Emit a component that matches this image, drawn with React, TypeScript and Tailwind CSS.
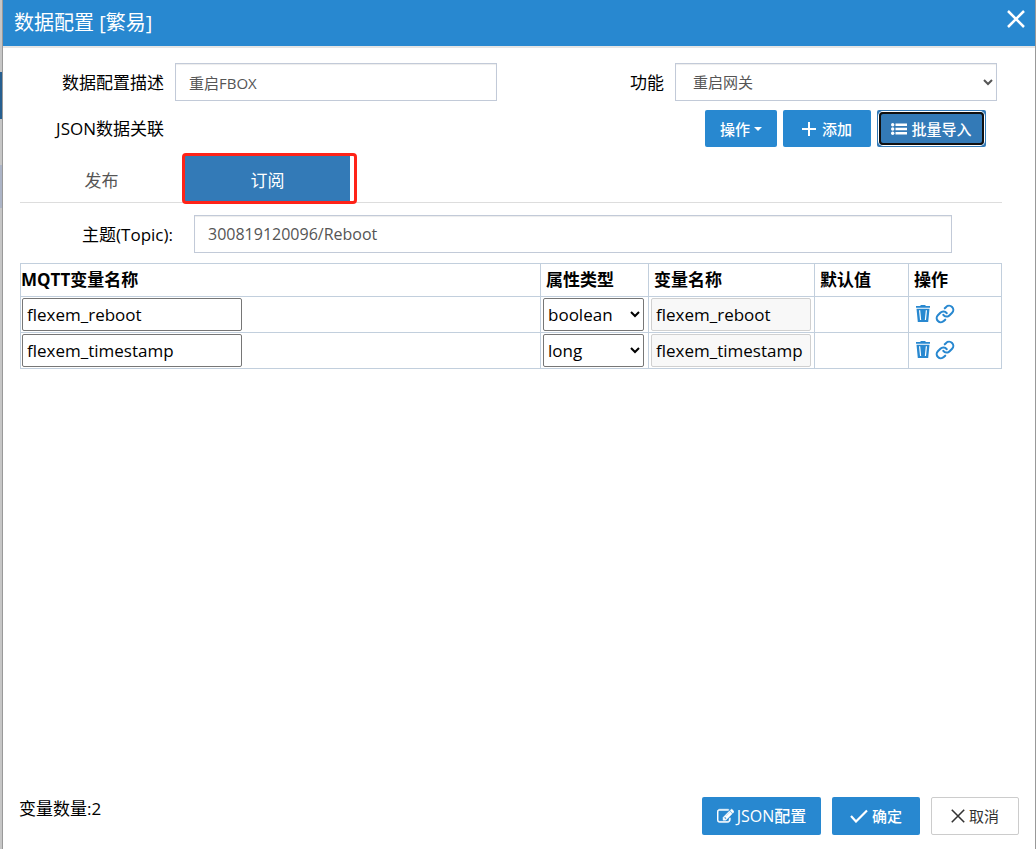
import { useState } from 'react';

type Row = {
  name: string;
  type: string;
};

const initialRows: Row[] = [
  { name: 'flexem_reboot', type: 'boolean' },
  { name: 'flexem_timestamp', type: 'long' },
];

const attrTypes = ['boolean', 'long', 'int', 'float', 'string'];

const primaryBtn =
  'flex items-center justify-center rounded-xs bg-[#2888d0] font-medium text-white hover:bg-[#337ab7]';

function CloseIcon({ className }: { className: string }) {
  return (
    <svg viewBox="0 0 18 18" className={className} fill="none" stroke="currentColor">
      <path d="M1 1l16 16M17 1L1 17" />
    </svg>
  );
}

function PlusIcon() {
  return (
    <svg viewBox="0 0 14 14" className="h-3.5 w-3.5" fill="none" stroke="currentColor" strokeWidth="2">
      <path d="M7 0v14M0 7h14" />
    </svg>
  );
}

function ListIcon() {
  return (
    <svg viewBox="0 0 16 12" className="h-3 w-4" fill="currentColor">
      <circle cx="1.7" cy="1.7" r="1.7" />
      <circle cx="1.7" cy="6" r="1.7" />
      <circle cx="1.7" cy="10.3" r="1.7" />
      <path d="M4.500 0.500h11.500v2.500H4.500zM4.500 4.700h11.500v2.500H4.500zM4.500 9h11.500v2.500H4.500z" />
    </svg>
  );
}

function EditIcon() {
  return (
    <svg viewBox="0 0 1792 1792" className="h-[17px] w-[17px]" fill="currentColor" stroke="currentColor" strokeWidth="50">
      <path d="M888 1184l116-116-152-152-116 116v56h96v96h56zm440-720q-16-16-33 1l-350 350q-17 17-1 33t33-1l350-350q17-17 1-33zm80 594v190q0 119-84.500 203.500t-203.500 84.500h-832q-119 0-203.500-84.500t-84.500-203.500v-832q0-119 84.500-203.500t203.500-84.500h832q63 0 117 25 15 7 18 23 3 17-9 29l-49 49q-14 14-32 8-23-6-45-6h-832q-66 0-113 47t-47 113v832q0 66 47 113t113 47h832q66 0 113-47t47-113v-126q0-13 9-22l64-64q15-15 35-7t20 29zm-96-738l288 288-672 672h-288v-288zm444 132l-92 92-288-288 92-92q28-28 68-28t68 28l152 152q28 28 28 68t-28 68z" />
    </svg>
  );
}

function CheckIcon() {
  return (
    <svg viewBox="0 0 18 14" className="h-3.5 w-[18px]" fill="none" stroke="currentColor" strokeWidth="2.200">
      <path d="M1 7l5 5.500L17 1.500" />
    </svg>
  );
}

function TrashIcon() {
  return (
    <svg viewBox="0 0 14 17" className="h-[17px] w-3.5">
      <path fill="currentColor" d="M4.500 0h5v1H14v1.700H0V1h4.500zM0.500 3.700h13L12.200 17H1.800z" />
      <path stroke="#fff" strokeWidth="1.200" fill="none" d="M3.600 5.200l1 9.800M10.400 5.200l-1 9.800" />
    </svg>
  );
}

function LinkIcon() {
  return (
    <svg viewBox="0 0 24 24" className="h-5 w-5" fill="none" stroke="currentColor" strokeWidth="2.500" strokeLinecap="round">
      <path d="M10 13a5 5 0 0 0 7.540.54l3-3a5 5 0 0 0-7.070-7.070l-1.720 1.710" />
      <path d="M14 11a5 5 0 0 0-7.540-.54l-3 3a5 5 0 0 0 7.070 7.070l1.710-1.710" />
    </svg>
  );
}

export default function App() {
  const [rows, setRows] = useState(initialRows);
  const [tab, setTab] = useState('sub');
  const [desc, setDesc] = useState('重启FBOX');
  const [topic, setTopic] = useState('300819120096/Reboot');

  const updateRow = (index: number, patch: Partial<Row>) => {
    setRows(rows.map((row, i) => (i === index ? { ...row, ...patch } : row)));
  };

  return (
    <div className="flex min-h-screen bg-[#999] pr-px font-['Open_Sans','Noto_Sans_CJK_SC',sans-serif] text-[17px] leading-6 text-black">
      {/* Page edge behind the dialog */}
      <div className="flex w-[3px] shrink-0 flex-col border-r border-[#999] bg-[#c6c6c6]">
        <div className="mt-[72px] h-[47px] bg-[#265f90]" />
        <div className="mt-[46px] h-[43px] bg-[#acb4c6]" />
      </div>

      <div role="dialog" aria-labelledby="dialog-title" className="flex min-w-0 flex-1 flex-col bg-white">
        <header className="flex h-12 items-center justify-between border-b-2 border-[#e5e5e5] bg-[#2888d0] pr-2.5 pl-[11px] text-white">
          <h1 id="dialog-title" className="text-[20px]">数据配置 [繁易]</h1>
          <button type="button" aria-label="关闭" className="mb-2">
            <CloseIcon className="h-[18px] w-[18px] stroke-[2.500]" />
          </button>
        </header>

        <main className="flex-1 pt-[15px] pr-[33px] pl-[17px]">
          <div className="grid grid-cols-[144px_1fr_156px_1fr] items-center gap-x-[11px] pr-[5px]">
            <label htmlFor="desc" className="pt-0.5 text-right">数据配置描述</label>
            <input
              id="desc"
              value={desc}
              onChange={(e) => setDesc(e.target.value)}
              className="h-[38px] min-w-0 border border-[#c2cad8] px-[13px] text-[15px] text-[#555] shadow-[inset_0_1px_1px_rgba(0,0,0,0.075)] outline-none"
            />
            <label htmlFor="func" className="pt-0.5 text-right">功能</label>
            <select
              id="func"
              className="h-[38px] min-w-0 border border-[#c2cad8] bg-white px-[13px] text-[15px] text-[#555] shadow-[inset_0_1px_1px_rgba(0,0,0,0.075)] outline-none"
            >
              <option>重启网关</option>
            </select>
          </div>

          <div className="mt-[9px] flex items-center justify-between pr-4">
            <span className="w-[144px] text-right">JSON数据关联</span>
            <div className="flex gap-1.5">
              <button type="button" className={`${primaryBtn} h-[37px] w-[72px] gap-1 text-[15px]`}>
                操作
                <svg viewBox="0 0 8 4" className="h-1 w-2" fill="currentColor">
                  <path d="M0 0h8L4 4z" />
                </svg>
              </button>
              <button type="button" className={`${primaryBtn} h-[37px] w-[88px] gap-1.5 text-[15px]`}>
                <PlusIcon />
                添加
              </button>
              <button
                type="button"
                className="flex h-[37px] w-[109px] rounded-xs bg-[#337ab7] p-0.5 text-[15px] font-medium text-white"
              >
                <span className="flex h-full w-full items-center justify-center gap-1 rounded-sm border-2 border-[#101010] ring-1 ring-white">
                  <ListIcon />
                  批量导入
                </span>
              </button>
            </div>
          </div>

          <div role="tablist" className="mt-[9px] flex h-[47px] items-stretch border-b border-[#ddd]">
            <button
              type="button"
              role="tab"
              aria-selected={tab === 'pub'}
              onClick={() => setTab('pub')}
              className="mr-0.5 w-[163px] pt-1 text-[#555]"
            >
              发布
            </button>
            <div className="relative flex">
              <button
                type="button"
                role="tab"
                aria-selected={tab === 'sub'}
                onClick={() => setTab('sub')}
                className="w-[165px] bg-[#337ab7] pt-1 text-white"
              >
                订阅
              </button>
              <div className="pointer-events-none absolute -top-[3px] -right-[7px] -bottom-0.5 -left-[3px] rounded-sm border-[3px] border-[#ff2318]" />
            </div>
          </div>

          <div className="mt-3 flex items-center pr-[50px]">
            <label htmlFor="topic" className="mr-[21px] w-[153px] pt-0.5 text-right">主题(Topic):</label>
            <input
              id="topic"
              value={topic}
              onChange={(e) => setTopic(e.target.value)}
              className="h-[38px] min-w-0 flex-1 border border-[#c2cad8] px-[13px] text-base text-[#555] shadow-[inset_0_1px_1px_rgba(0,0,0,0.075)] outline-none"
            />
          </div>

          <table className="mt-2.5 w-full table-fixed border-collapse text-left [&_td]:border [&_td]:border-[#c2cfdd] [&_td]:p-px [&_th]:border [&_th]:border-[#c2cfdd]">
            <thead>
              <tr className="h-[33px]">
                <th>MQTT变量名称</th>
                <th className="w-[108px] pl-[5px]">属性类型</th>
                <th className="w-[166px] pl-[5px]">变量名称</th>
                <th className="w-[94px] pl-[5px]">默认值</th>
                <th className="w-[93px] pl-[5px]">操作</th>
              </tr>
            </thead>
            <tbody>
              {rows.map((row, i) => (
                <tr key={i} className="h-9">
                  <td>
                    <input
                      aria-label="MQTT变量名称"
                      value={row.name}
                      onChange={(e) => updateRow(i, { name: e.target.value })}
                      className="block h-[33px] w-[220px] rounded-xs border border-[#767676] px-1 outline-none"
                    />
                  </td>
                  <td>
                    <select
                      aria-label="属性类型"
                      value={row.type}
                      onChange={(e) => updateRow(i, { type: e.target.value })}
                      className="ml-px block h-[33px] w-[101px] rounded-xs border border-[#767676] bg-white outline-none"
                    >
                      {attrTypes.map((type) => (
                        <option key={type}>{type}</option>
                      ))}
                    </select>
                  </td>
                  <td>
                    <input
                      aria-label="变量名称"
                      value={row.name}
                      readOnly
                      className="ml-px block h-[33px] w-40 rounded-xs border border-[#d0d0d0] bg-[#f8f8f8] px-1 outline-none"
                    />
                  </td>
                  <td />
                  <td>
                    <div className="flex items-center gap-[5px] pb-0.5 pl-1.5 text-[#2888d0]">
                      <button
                        type="button"
                        aria-label="删除"
                        onClick={() => setRows(rows.filter((_, n) => n !== i))}
                      >
                        <TrashIcon />
                      </button>
                      <button type="button" aria-label="关联">
                        <LinkIcon />
                      </button>
                    </div>
                  </td>
                </tr>
              ))}
            </tbody>
          </table>
        </main>

        <footer className="flex items-end justify-between pr-4 pb-3.5 pl-4">
          <span className="mb-3.5">变量数量:{rows.length}</span>
          <div className="flex gap-[11px]">
            <button type="button" className={`${primaryBtn} h-[38px] w-[119px] gap-[3px] text-base`}>
              <EditIcon />
              JSON配置
            </button>
            <button type="button" className={`${primaryBtn} h-[38px] w-[88px] gap-1 text-[15px]`}>
              <CheckIcon />
              确定
            </button>
            <button
              type="button"
              className="flex h-[38px] w-[88px] items-center justify-center gap-1 rounded-xs border border-[#ccc] bg-white text-[15px] text-[#333]"
            >
              <CloseIcon className="h-3.5 w-3.5 stroke-[2]" />
              取消
            </button>
          </div>
        </footer>
      </div>
    </div>
  );
}
